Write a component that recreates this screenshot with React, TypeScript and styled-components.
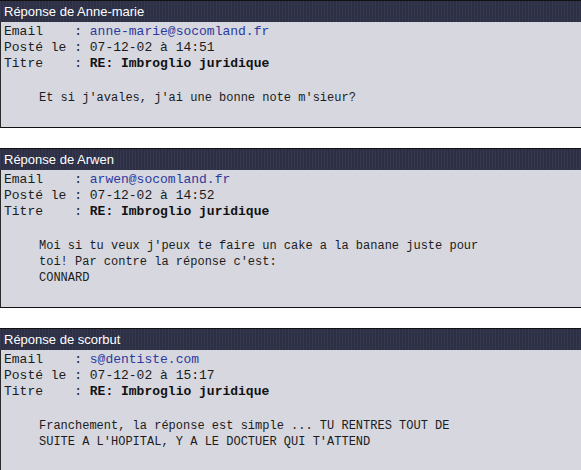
import styled, { createGlobalStyle } from "styled-components";

const GlobalStyle = createGlobalStyle`
    html, body {
        margin: 0;
        padding: 0;
        background: #ffffff;
        overflow: hidden;
    }
`;

const Page = styled.div`
    width: 581px;
    display: flex;
    flex-direction: column;
    gap: 20px;
`;

const Post = styled.div`
    display: flex;
    flex-direction: column;
    width: 100%;
`;

const Header = styled.div`
    height: 21px;
    border-top: 1px solid #111;
    padding-left: 4px;
    display: flex;
    align-items: center;
    background: repeating-linear-gradient(90deg, #35384f 0 1px, #2d3045 1px 3px);
    color: #ffffff;
    font-family: "Liberation Sans", Arial, sans-serif;
    font-size: 13px;
`;

const Body = styled.div`
    background-color: #d6d7df;
    border-left: 1px solid #2a2a2a;
    border-bottom: 1px solid #111;
    padding: 2px 0 21px 3px;
    font-family: "Liberation Mono", "Courier New", monospace;
    color: #1c1c1c;
`;

const Field = styled.div`
    font-size: 13px;
    line-height: 16px;
    white-space: pre;
`;

const Label = styled.span`
    display: inline-block;
    width: 9ch;
`;

const Mail = styled.span`
    color: #2c3a9e;
`;

const Subject = styled.span`
    font-weight: bold;
    color: #111;
`;

const Message = styled.div`
    margin: 18px 0 0 35px;
    width: 446px;
    font-size: 12px;
    line-height: 16px;
`;

type Reply = {
    author: string;
    email: string;
    date: string;
    lines: string[];
};

const replies: Reply[] = [
    {
        author: "Anne-marie",
        email: "anne-marie@socomland.fr",
        date: "07-12-02 à 14:51",
        lines: ["Et si j'avales, j'ai une bonne note m'sieur?"],
    },
    {
        author: "Arwen",
        email: "arwen@socomland.fr",
        date: "07-12-02 à 14:52",
        lines: [
            "Moi si tu veux j'peux te faire un cake a la banane juste pour toi! Par contre la réponse c'est:",
            "CONNARD",
        ],
    },
    {
        author: "scorbut",
        email: "s@dentiste.com",
        date: "07-12-02 à 15:17",
        lines: [
            "Franchement, la réponse est simple ... TU RENTRES TOUT DE SUITE A L'HOPITAL, Y A LE DOCTUER QUI T'ATTEND",
        ],
    },
];

const App = () => {
    return (
        <>
            <GlobalStyle />
            <Page>
                {replies.map((r) => (
                    <Post key={r.author}>
                        <Header>Réponse de {r.author}</Header>
                        <Body>
                            <Field>
                                <Label>Email</Label>: <Mail>{r.email}</Mail>
                            </Field>
                            <Field>
                                <Label>Posté le</Label>: {r.date}
                            </Field>
                            <Field>
                                <Label>Titre</Label>: <Subject>RE: Imbroglio juridique</Subject>
                            </Field>
                            <Message>
                                {r.lines.map((l, i) => (
                                    <div key={i}>{l}</div>
                                ))}
                            </Message>
                        </Body>
                    </Post>
                ))}
            </Page>
        </>
    );
};

export default App;
